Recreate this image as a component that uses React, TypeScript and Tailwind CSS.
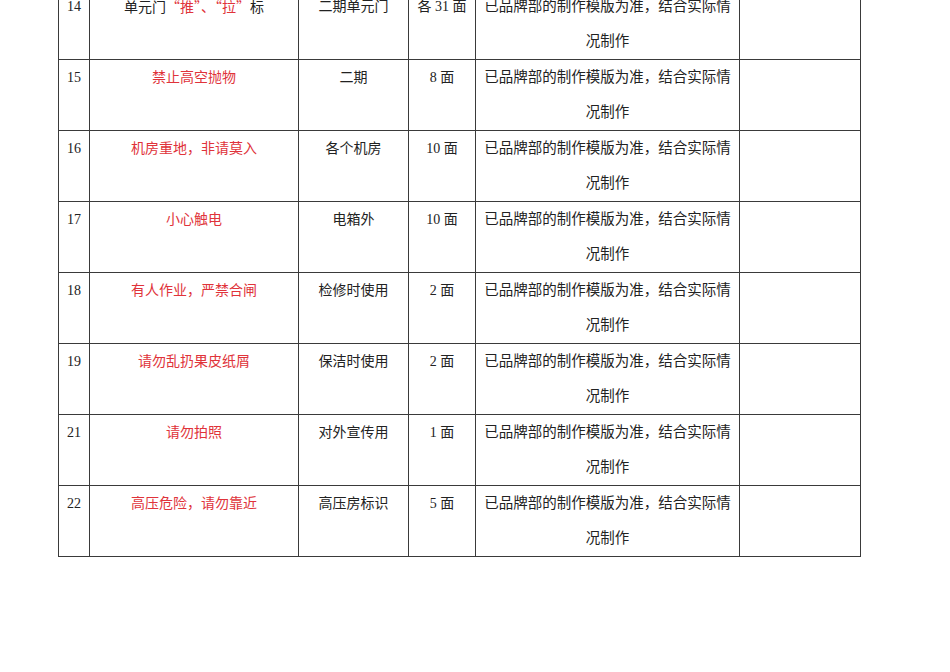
type Row = {
  no: string;
  name: React.ReactNode;
  place: string;
  qty: string;
};

const red = "text-[#e0333a]";
const cjk = { fontFamily: '"Noto Sans CJK SC", sans-serif' };

const rows: Row[] = [
  {
    no: "14",
    name: (
      <>
        单元门
        <span className={red} style={cjk}>
          “推”、“拉”
        </span>
        标
      </>
    ),
    place: "二期单元门",
    qty: "各 31 面",
  },
  { no: "15", name: <span className={red}>禁止高空抛物</span>, place: "二期", qty: "8 面" },
  { no: "16", name: <span className={red}>机房重地，非请莫入</span>, place: "各个机房", qty: "10 面" },
  { no: "17", name: <span className={red}>小心触电</span>, place: "电箱外", qty: "10 面" },
  { no: "18", name: <span className={red}>有人作业，严禁合闸</span>, place: "检修时使用", qty: "2 面" },
  { no: "19", name: <span className={red}>请勿乱扔果皮纸屑</span>, place: "保洁时使用", qty: "2 面" },
  { no: "21", name: <span className={red}>请勿拍照</span>, place: "对外宣传用", qty: "1 面" },
  { no: "22", name: <span className={red}>高压危险，请勿靠近</span>, place: "高压房标识", qty: "5 面" },
];

const cell = "border border-[#3a3a3a] align-top text-center p-0";

export default function App() {
  return (
    <div
      className="w-[950px] h-[672px] overflow-hidden bg-white text-[#222] text-[14px] leading-[35px]"
      style={{ fontFamily: '"Liberation Serif", "Noto Sans CJK SC", serif' }}
    >
      <table className="ml-[58px] mt-[-12px] border-collapse table-fixed w-[803px]">
        <colgroup>
          <col className="w-[31px]" />
          <col className="w-[209px]" />
          <col className="w-[110px]" />
          <col className="w-[67px]" />
          <col className="w-[264px]" />
          <col className="w-[121px]" />
        </colgroup>
        <tbody>
          {rows.map((r) => (
            <tr key={r.no} className="h-[71px]">
              <td className={cell}>{r.no}</td>
              <td className={cell}>{r.name}</td>
              <td className={cell}>{r.place}</td>
              <td className={cell}>{r.qty}</td>
              <td className={`${cell} text-[14.5px]`}>
                已品牌部的制作模版为准，结合实际情
                <br />
                况制作
              </td>
              <td className={cell}></td>
            </tr>
          ))}
        </tbody>
      </table>
    </div>
  );
}
